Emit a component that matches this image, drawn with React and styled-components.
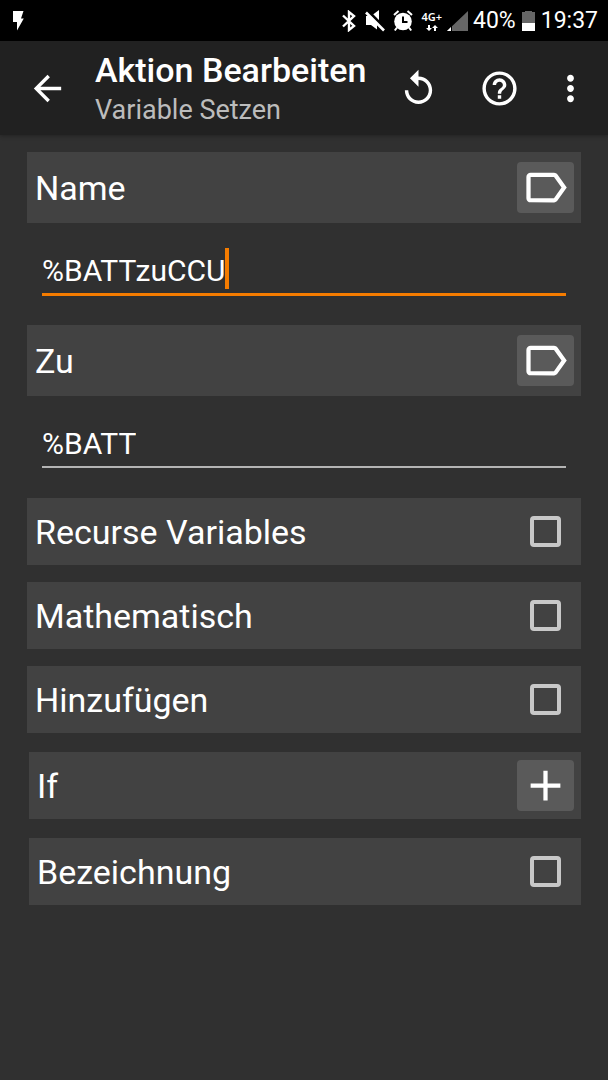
import React, { useState } from 'react';
import styled, { createGlobalStyle } from 'styled-components';
import {
  MdAdd,
  MdArrowBack,
  MdHelpOutline,
  MdMoreVert,
  MdOutlineLabel,
  MdReplay,
} from 'react-icons/md';

const GlobalStyle = createGlobalStyle`
  * {
    box-sizing: border-box;
  }

  body {
    margin: 0;
    background: #303030;
    color: #fff;
    font-family: Roboto, 'Noto Sans', sans-serif;
  }
`;

// Small drawings of the status bar
const BoltIcon = () => (
  <svg width="12" height="20" viewBox="0 0 12 20" fill="#fff">
    <path d="M0 0h10.500L8 7.500h2.800L4 19.500V11H0z" />
  </svg>
);

const BluetoothIcon = () => (
  <svg width="16" height="22" viewBox="0 0 16 22" fill="none" stroke="#fff" strokeWidth="2.400">
    <path d="M2 5.500l11 10.500L8 20V2l5 4L2 16.500" />
  </svg>
);

const MuteIcon = () => (
  <svg width="20" height="22" viewBox="0 0 20 22">
    <path d="M1 6h5l8-6v21l-8-6H1z" fill="#fff" />
    <path d="M2 0l18 18.500" stroke="#000" strokeWidth="3" />
    <path d="M12 13.500V22h8v-8.500z" fill="#000" />
    <path d="M1 2.500L19 20.500" stroke="#fff" strokeWidth="2.600" />
  </svg>
);

const AlarmIcon = () => (
  <svg width="20" height="22" viewBox="0 0 20 22" fill="none" stroke="#fff" strokeWidth="2">
    <circle cx="10" cy="11.500" r="8.800" fill="#fff" stroke="none" />
    <path d="M1 5l4.500-4M19 5l-4.500-4M4 17.500L1.800 20.500M16 17.500l2.200 3" />
    <path d="M10 6.500V12h4.500" stroke="#000" />
  </svg>
);

const DataArrows = () => (
  <svg width="12" height="6" viewBox="0 0 12 6" fill="#fff">
    <path d="M2 0h2v3h2L3 6 0 3h2zM8 6h2V3h2L9 0 6 3h2z" />
  </svg>
);

const SignalIcon = () => (
  <svg width="21" height="20" viewBox="0 0 21 20">
    <path d="M21 0v20H0z" fill="#666" />
    <path d="M4 16v4H0z" fill="#fff" />
    <path d="M4.500 15v5" stroke="#000" />
  </svg>
);

const BatteryIcon = () => (
  <svg width="13" height="20" viewBox="0 0 13 20">
    <path d="M3 0h7v1h3v11H0V1h3z" fill="#666" />
    <path d="M0 12h13v8H0z" fill="#fff" />
  </svg>
);

const TextField = ({ id, label, value, onChange, active }) => (
  <>
    <Row $tall>
      <RowLabel htmlFor={id}>{label}</RowLabel>
      <RowButton type="button" aria-label={`${label} Variable`}>
        <MdOutlineLabel />
      </RowButton>
    </Row>
    <FieldLine $active={active}>
      <FieldInput
        id={id}
        type="text"
        spellCheck={false}
        value={value}
        onChange={(e) => onChange(e.target.value)}
      />
      {active && <Caret />}
    </FieldLine>
  </>
);

const CheckRow = ({ id, label }) => (
  <Row>
    <RowLabel htmlFor={id}>{label}</RowLabel>
    <Checkbox id={id} type="checkbox" />
  </Row>
);

const App = () => {
  const [name, setName] = useState('%BATTzuCCU');
  const [to, setTo] = useState('%BATT');

  return (
    <>
      <GlobalStyle />
      <StatusBar>
        <BoltIcon />
        <StatusIcons>
          <BluetoothIcon />
          <MuteIcon />
          <AlarmIcon />
          <Signal>
            <Network>
              4G+
              <DataArrows />
            </Network>
            <SignalIcon />
          </Signal>
        </StatusIcons>
        <StatusTexts>
          <span>40%</span>
          <BatteryIcon />
          <span>19:37</span>
        </StatusTexts>
      </StatusBar>

      <AppBar>
        <BarButton type="button" aria-label="Zurück">
          <MdArrowBack />
        </BarButton>
        <Titles>
          <Title>Aktion Bearbeiten</Title>
          <Subtitle>Variable Setzen</Subtitle>
        </Titles>
        <Actions>
          <BarButton type="button" aria-label="Rückgängig">
            <MdReplay />
          </BarButton>
          <BarButton type="button" aria-label="Hilfe">
            <MdHelpOutline />
          </BarButton>
        </Actions>
        <BarButton type="button" aria-label="Mehr">
          <MdMoreVert />
        </BarButton>
      </AppBar>

      <Content>
        <TextField id="name" label="Name" value={name} onChange={setName} active />
        <TextField id="to" label="Zu" value={to} onChange={setTo} />
        <Options>
          <CheckRow id="recurse" label="Recurse Variables" />
          <CheckRow id="math" label="Mathematisch" />
          <CheckRow id="append" label="Hinzufügen" />
        </Options>
        <Extras>
          <Row>
            <RowLabel as="span">If</RowLabel>
            <RowButton type="button" aria-label="If">
              <MdAdd />
            </RowButton>
          </Row>
          <CheckRow id="caption" label="Bezeichnung" />
        </Extras>
      </Content>
    </>
  );
};

const StatusBar = styled.div`
  display: flex;
  align-items: center;
  height: 41px;
  padding: 1px 10px 0 13px;
  background: #000;
`;

const StatusIcons = styled.div`
  display: flex;
  align-items: center;
  gap: 8px;
  margin-left: auto;
`;

const StatusTexts = styled.div`
  display: flex;
  align-items: center;
  gap: 6px;
  margin-left: 5px;
  font-size: 23px;
  line-height: 38px;
`;

const Signal = styled.div`
  display: flex;
  align-items: center;
  gap: 5px;
`;

const Network = styled.span`
  display: flex;
  flex-direction: column;
  align-items: center;
  gap: 2px;
  font: 600 11px/12px 'Noto Sans', sans-serif;
`;

const AppBar = styled.header`
  display: flex;
  align-items: center;
  height: 94px;
  padding: 0 17px 0 27px;
  background: #212121;
  box-shadow: 0 1px 4px rgba(0, 0, 0, 0.3);
`;

const BarButton = styled.button`
  display: flex;
  flex: none;
  padding: 0;
  border: 0;
  background: none;
  color: #fff;
  font-size: 41px;
  cursor: pointer;
`;

const Titles = styled.div`
  flex: 1;
  padding: 4px 0 0 27px;
  white-space: nowrap;
`;

const Title = styled.h1`
  margin: 0;
  font-size: 34px;
  font-weight: 500;
  line-height: 40px;
`;

const Subtitle = styled.p`
  margin: 0;
  color: #bcbcbc;
  font-size: 27px;
  line-height: 40px;
`;

const Actions = styled.div`
  display: flex;
  gap: 40px;
  margin-right: 30px;
`;

const Content = styled.main`
  padding: 17px 27px;
`;

const Row = styled.div`
  display: flex;
  align-items: center;
  justify-content: space-between;
  height: ${({ $tall }) => ($tall ? '71px' : '67px')};
  padding: 0 7px 0 8px;
  background: #424242;
`;

const RowLabel = styled.label`
  flex: 1;
  font-size: 34px;
  line-height: 44px;
`;

const RowButton = styled.button`
  display: flex;
  align-items: center;
  justify-content: center;
  width: 57px;
  height: 51px;
  padding: 0;
  border: 0;
  border-radius: 4px;
  background: #5a5a5a;
  color: #fff;
  font-size: 51px;
  cursor: pointer;
`;

const Checkbox = styled.input`
  appearance: none;
  width: 31px;
  height: 31px;
  margin: 0 13px;
  border: 4px solid #c8c8c8;
  border-radius: 4px;

  &:checked {
    background: #f57c00;
  }
`;

const FieldLine = styled.div`
  display: flex;
  margin: 25px 15px 30px;
  padding-bottom: 4px;
  border-bottom: 2px solid ${({ $active }) => ($active ? '#f57c00' : '#b4b4b4')};
  box-shadow: ${({ $active }) => ($active ? '0 1px #f57c00' : 'none')};
`;

const FieldInput = styled.input`
  field-sizing: content;
  height: 41px;
  padding: 3px 0 0;
  border: 0;
  outline: 0;
  background: none;
  color: #fff;
  font-family: inherit;
  font-size: 30px;
`;

const Caret = styled.span`
  width: 4px;
  background: #f57c00;
`;

const Options = styled.section`
  display: grid;
  gap: 17px;
`;

const Extras = styled.section`
  display: grid;
  gap: 19px;
  margin-top: 19px;
  padding-left: 2px;
`;

export default App;
